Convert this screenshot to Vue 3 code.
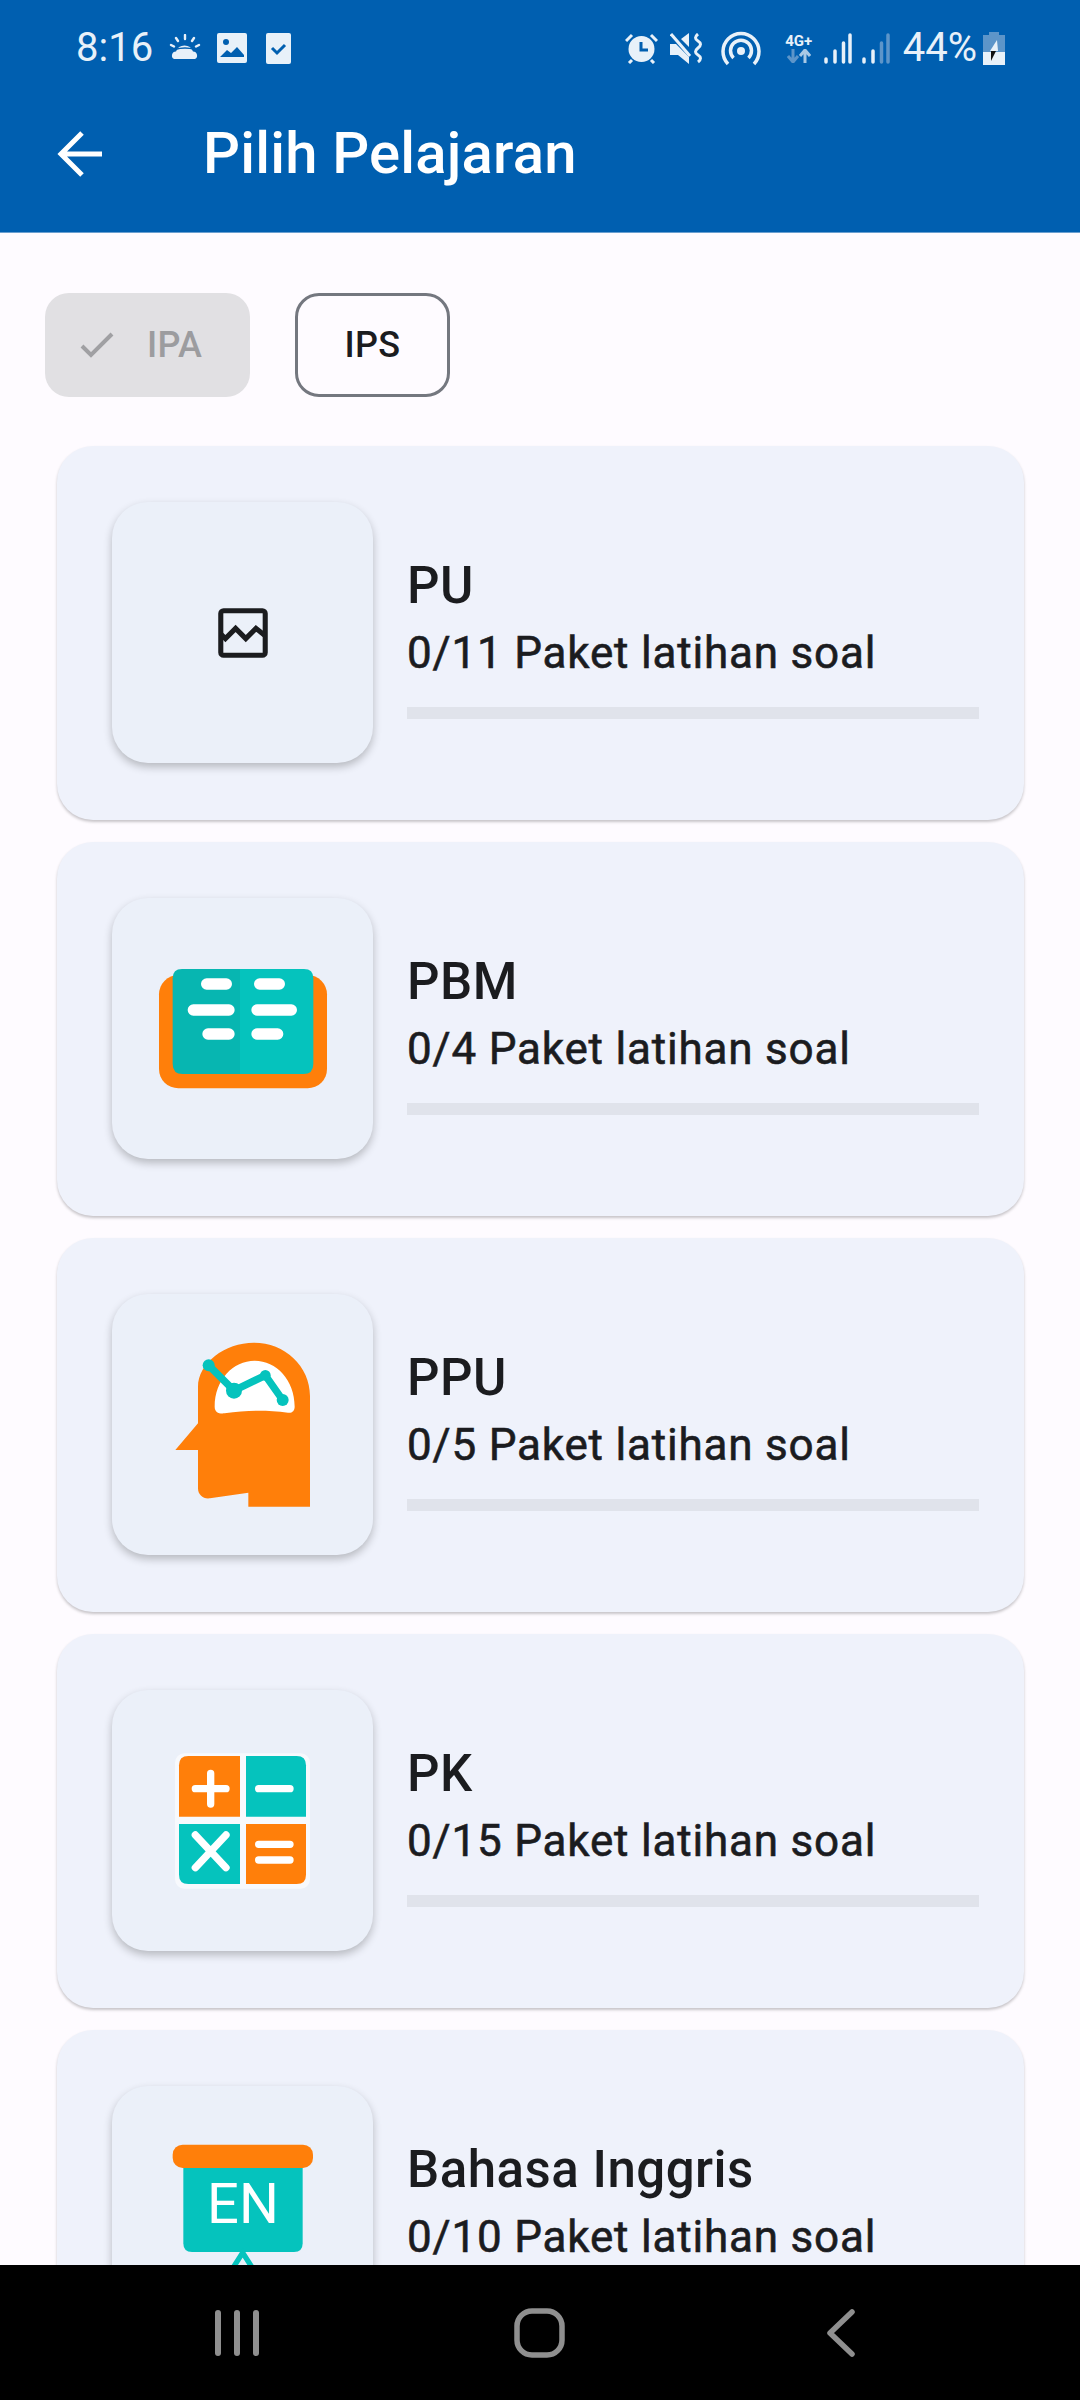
<script setup>
const subjects = [
  { name: 'PU', sub: '0/11 Paket latihan soal', icon: 'broken' },
  { name: 'PBM', sub: '0/4 Paket latihan soal', icon: 'book' },
  { name: 'PPU', sub: '0/5 Paket latihan soal', icon: 'head' },
  { name: 'PK', sub: '0/15 Paket latihan soal', icon: 'calc' },
  { name: 'Bahasa Inggris', sub: '0/10 Paket latihan soal', icon: 'en' },
]
</script>

<template>
  <div class="screen">
    <header class="appbar">
      <div class="status">
        <span class="time">8:16</span>
        <svg class="s-sun" width="32" height="28" viewBox="0 0 32 28" fill="#e8f1f9">
          <path d="M5 25a4 4 0 0 1 2-7.500 9 9 0 0 1 17 0 4 4 0 0 1 2 7.500z"/>
          <path d="M16 1v4M7 4l2 3M25 4l-2 3M2 11l3 1.500M30 11l-3 1.500" stroke="#e8f1f9" stroke-width="2.400" stroke-linecap="round"/>
          <path d="M6 15.500q10-3 20 0" stroke="#005fb0" stroke-width="1.500" fill="none"/>
        </svg>
        <svg class="s-img" width="30" height="30" viewBox="0 0 30 30">
          <rect width="30" height="30" rx="2" fill="#e8f1f9"/>
          <circle cx="9" cy="9" r="3" fill="#005fb0"/>
          <path d="M3 24l7-7 4 3 6-6 7 8v-0l0 2H3z" fill="#005fb0"/>
          <path d="M3 27v-3h24v3z" fill="#e8f1f9"/>
        </svg>
        <svg class="s-chk" width="25" height="31" viewBox="0 0 25 31">
          <rect width="25" height="31" rx="2" fill="#e8f1f9"/>
          <path d="M6 15l5 5 8-8" fill="none" stroke="#005fb0" stroke-width="3"/>
        </svg>
        <span class="spacer"></span>
        <svg class="s-alarm" width="33" height="31" viewBox="0 0 33 31" fill="#e8f1f9">
          <circle cx="16.500" cy="16" r="13"/>
          <path d="M1 8l6-6M32 8l-6-6M4 30l3-3M29 30l-3-3" stroke="#e8f1f9" stroke-width="3"/>
          <path d="M16 9v8h7" fill="none" stroke="#005fb0" stroke-width="3"/>
        </svg>
        <svg class="s-mute" width="32" height="31" viewBox="0 0 32 31" fill="#e8f1f9">
          <path d="M0 11h6L19 24v7L8 22H0zM11 6l8-6v14z"/>
          <path d="M1 1l19 22" stroke="#e8f1f9" stroke-width="3"/>
          <path d="M28 1q-5 4 0 7t0 7 0 7 0 7" fill="none" stroke="#e8f1f9" stroke-width="3"/>
        </svg>
        <svg class="s-hot" width="40" height="35" viewBox="0 0 40 35" fill="none" stroke="#e8f1f9" stroke-width="3.500">
          <path d="M7 33a18 18 0 1 1 26 0"/>
          <path d="M12.500 27a10.500 10.500 0 1 1 15 0"/>
          <circle cx="20" cy="20" r="4" fill="#e8f1f9" stroke="none"/>
        </svg>
        <div class="net">
          <span class="net-t">4G+</span>
          <svg width="24" height="14" viewBox="0 0 24 14">
            <path d="M6 0v11M1 7l5 6 5-6" fill="none" stroke="#5d95c9" stroke-width="3"/>
            <path d="M18 14V3M13 7l5-6 5 6" fill="none" stroke="#a9c9e5" stroke-width="3"/>
          </svg>
        </div>
        <svg class="s-sig" width="28" height="31" viewBox="0 0 28 31" stroke-linecap="round" stroke-width="3.500" fill="none">
          <path d="M2 29v-3M11 29v-11M19.500 29V10M26 29V2" stroke="#e8f1f9"/>
        </svg>
        <svg class="s-sig2" width="28" height="31" viewBox="0 0 28 31" stroke-linecap="round" stroke-width="3.500" fill="none">
          <path d="M2 29v-3M11 29v-11" stroke="#e8f1f9"/>
          <path d="M19.500 29V10M26 29V2" stroke="#5d95c9"/>
        </svg>
        <span class="pct">44%</span>
        <svg class="s-bat" width="22" height="33" viewBox="0 0 22 33">
          <path d="M6 0h10v3h6v30H0V3h6z" fill="#5d95c9"/>
          <rect y="20" width="22" height="13" fill="#e8f1f9"/>
          <path d="M8 19h5l-5 10z" fill="#111"/>
          <path d="M14 8l-7 11h8z" fill="#e8f1f9"/>
        </svg>
      </div>
      <div class="bar">
        <svg class="back" width="46" height="46" viewBox="0 0 46 46" fill="none" stroke="#fff" stroke-width="5">
          <path d="M45 23H4M25 2L4 23l21 21"/>
        </svg>
        <h1 class="title">Pilih Pelajaran</h1>
      </div>
    </header>

    <main class="content">
      <div class="chips">
        <div class="chip chip-on">
          <svg width="36" height="36" viewBox="0 0 36 36" fill="none" stroke="#a0a0a3" stroke-width="4">
            <path d="M3 19l9 9L33 7"/>
          </svg>
          <span>IPA</span>
        </div>
        <div class="chip chip-off"><span>IPS</span></div>
      </div>

      <div class="list">
        <article v-for="s in subjects" :key="s.name" class="card">
          <div class="thumb">
            <svg v-if="s.icon === 'broken'" width="50" height="50" viewBox="0 0 54 54" fill="none" stroke="#1b1c1f" stroke-width="5.500">
              <rect x="3" y="3" width="48" height="48" rx="3"/>
              <path d="M3 28l5 5 11-11 11 11 11-11 10 8"/>
            </svg>
            <svg v-else-if="s.icon === 'book'" width="261" height="261" viewBox="-54 -96 783 783">
              <rect x="87" y="135" width="504" height="340" rx="58" fill="#ff7f0a"/>
              <path d="M128 145q0-28 28-28h174v315H158q-30 0-30-30z" fill="#07b6b1"/>
              <path d="M330 117h192q28 0 28 28v257q0 30-30 30H330z" fill="#05c3bd"/>
              <g stroke="#fff" stroke-width="34" stroke-linecap="round">
                <path d="M230 162h59M389 162h59M190 240h107M381 240h103M234 312h63M381 312h62"/>
              </g>
            </svg>
            <svg v-else-if="s.icon === 'head'" width="261" height="261" viewBox="-54 -48 783 783">
              <path d="M204 340V230c0-70 80-132 168-132 92 0 168 70 168 160v332H355v-42l-115 17c-20 3-36-10-36-30V420h-68z" fill="#ff7f0a"/>
              <path d="M254 290c0-80 55-138 120-138s120 58 120 138c0 12-8 20-20 18-66-8-120-8-190 2-18 2-30-4-30-20z" fill="#fff"/>
              <g fill="none" stroke="#05c3bd" stroke-width="22">
                <path d="M236 166l76 76 94-46 52 74"/>
              </g>
              <g fill="#05c3bd">
                <circle cx="236" cy="166" r="18"/><circle cx="312" cy="242" r="24"/><circle cx="406" cy="196" r="16"/><circle cx="458" cy="270" r="18"/>
              </g>
            </svg>
            <svg v-else-if="s.icon === 'calc'" width="261" height="261" viewBox="-54 -90 783 783">
              <rect x="135" y="100" width="405" height="406" rx="28" fill="#fff" opacity=".6"/>
              <path d="M147 136q0-28 28-28h155v182H147z" fill="#ff7f0a"/>
              <path d="M348 108h152q28 0 28 28v154H348z" fill="#05c3bd"/>
              <path d="M147 312h183v180H175q-28 0-28-28z" fill="#05c3bd"/>
              <path d="M348 312h180v152q0 28-28 28H348z" fill="#ff7f0a"/>
              <g stroke="#fff" stroke-width="22" stroke-linecap="round">
                <path d="M196 206h92M242 160v92M386 206h94M196 345l92 98M288 345l-92 98M386 373h94M386 420h94"/>
              </g>
            </svg>
            <svg v-else width="261" height="261" viewBox="36 108 783 783">
              <path d="M250 340h358v240q0 26-26 26H276q-26 0-26-26z" fill="#05c3bd"/>
              <rect x="218" y="284" width="421" height="70" rx="30" fill="#ff7f0a"/>
              <text x="429" y="520" class="en-text" text-anchor="middle">EN</text>
              <path d="M395 660l33-52 33 52" fill="none" stroke="#05c3bd" stroke-width="16"/>
            </svg>
          </div>
          <div class="info">
            <div class="name">{{ s.name }}</div>
            <div class="sub">{{ s.sub }}</div>
            <div class="progress"></div>
          </div>
        </article>
      </div>
    </main>

    <nav class="navbar">
      <svg class="nav-menu" width="44" height="46" viewBox="0 0 44 46" fill="#8f8f8f">
        <rect x="0" y="0" width="6" height="46" rx="3"/>
        <rect x="19" y="0" width="6" height="46" rx="3"/>
        <rect x="38" y="0" width="6" height="46" rx="3"/>
      </svg>
      <svg class="nav-home" width="51" height="50" viewBox="0 0 51 50" fill="none" stroke="#8f8f8f" stroke-width="5.500">
        <rect x="3" y="3" width="45" height="44" rx="15"/>
      </svg>
      <svg class="nav-back" width="28" height="48" viewBox="0 0 28 48" fill="none" stroke="#8f8f8f" stroke-width="5.500" stroke-linecap="round" stroke-linejoin="round">
        <path d="M25 3L3 24l22 21"/>
      </svg>
    </nav>
  </div>
</template>

<style>
html, body { margin: 0; padding: 0; background: #fefbff; }
</style>

<style scoped>
.screen {
  width: 1080px;
  height: 2400px;
  display: flex;
  flex-direction: column;
  overflow: hidden;
  background: #fefbff;
  font-family: Roboto, sans-serif;
  color: #1b1c1f;
}
.appbar {
  background: #005fb0;
  height: 233px;
  box-sizing: border-box;
  border-bottom: 1px solid #6a9fd0;
  flex: none;
}
.status {
  box-sizing: border-box;
  padding: 30px 75px 0 76px;
  display: flex;
  align-items: center;
  height: 66px;
  color: #e8f1f9;
}
.time { font-size: 40px; width: 93px; line-height: 1; }
.s-img { margin-left: 16px; }
.s-chk { margin-left: 19px; }
.spacer { flex: 1; }
.s-mute { margin-left: 12px; }
.s-hot { margin-left: 19px; }
.net { margin-left: 22px; width: 32px; display: flex; flex-direction: column; align-items: center; }
.net-t { font-size: 15px; font-weight: 700; line-height: 15px; color: #e8f1f9; }
.s-sig { margin-left: 9px; }
.s-sig2 { margin-left: 10px; }
.pct { font-size: 40px; margin-left: 13px; line-height: 1; }
.s-bat { margin-left: 6px; }
.bar { display: flex; align-items: center; height: 166px; box-sizing: border-box; padding: 10px 0 0 57px; }
.title {
  margin: -2px 0 0 100px;
  font-size: 58px;
  font-weight: 500;
  color: #fff;
  letter-spacing: .2px;
}
.content { flex: 1; min-height: 0; overflow: hidden; padding: 60px 56px 0 57px; }
.chips { display: flex; gap: 45px; margin-left: -12px; }
.chip {
  height: 104px;
  box-sizing: border-box;
  border-radius: 24px;
  display: flex;
  align-items: center;
  font-size: 36px;
  font-weight: 500;
  letter-spacing: .3px;
}
.chip-on { width: 205px; background: #e1e0e3; color: #9c9c9f; padding-left: 34px; gap: 32px; }
.chip-off { width: 155px; border: 3px solid #74777f; justify-content: center; }
.list { display: flex; flex-direction: column; gap: 22px; margin-top: 49px; }
.card {
  flex: none;
  height: 374px;
  box-sizing: border-box;
  padding: 56px 45px 0 55px;
  background: #eff2fb;
  border-radius: 36px;
  box-shadow: 0 2px 3px rgba(0, 0, 0, .22);
  display: flex;
  gap: 34px;
}
.thumb {
  flex: none;
  width: 261px;
  height: 261px;
  border-radius: 36px;
  background: #ebf0f9;
  box-shadow: 0 4px 8px rgba(0, 0, 0, .24);
  display: flex;
  align-items: center;
  justify-content: center;
  overflow: hidden;
}
.en-text { font-family: Roboto, sans-serif; font-size: 168px; fill: #fff; }
.info { flex: 1; padding-top: 54px; min-width: 0; }
.name { font-size: 51px; font-weight: 500; line-height: 60px; letter-spacing: .5px; }
.sub { font-size: 44px; font-weight: 400; -webkit-text-stroke: .6px #1b1c1f; line-height: 56px; margin-top: 9px; letter-spacing: .8px; }
.progress { height: 12px; background: #e0e3eb; margin-top: 26px; }
.navbar {
  flex: none;
  height: 135px;
  background: #000;
  display: flex;
  align-items: center;
  padding-left: 215px;
}
.nav-home { margin-left: 255px; }
.nav-back { margin-left: 262px; }
</style>
